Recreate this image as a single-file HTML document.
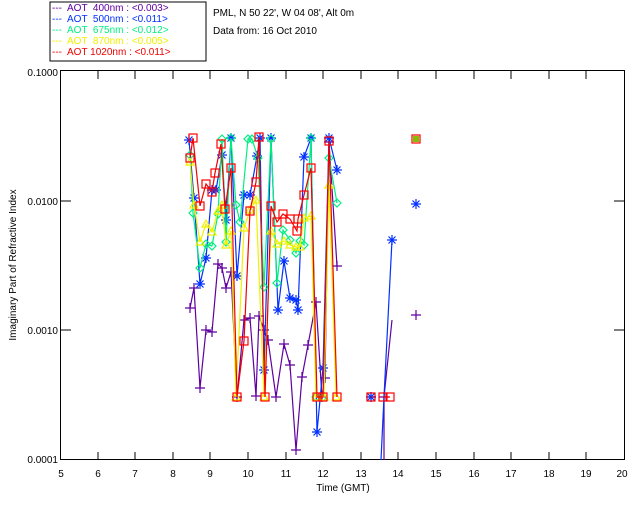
<!DOCTYPE html>
<html><head><meta charset="utf-8"><style>
body{margin:0;background:#fff;width:640px;height:512px;overflow:hidden}
svg{display:block}
text{font-family:"Liberation Sans",sans-serif;font-size:10px}
</style></head><body>
<svg width="640" height="512" viewBox="0 0 640 512">
<defs>
<marker id="mr" markerWidth="10" markerHeight="10" refX="5" refY="5" markerUnits="userSpaceOnUse"><rect x="1" y="1" width="8" height="8" fill="none" stroke="#f00" stroke-width="1.2"/></marker>
<marker id="mb" markerWidth="12" markerHeight="12" refX="6" refY="6" markerUnits="userSpaceOnUse"><path d="M1 6H11M6 1V11M2.5 2.5L9.5 9.5M9.5 2.5L2.5 9.5" stroke="#0030ff" stroke-width="1.2"/></marker>
<marker id="mg" markerWidth="10" markerHeight="10" refX="5" refY="5" markerUnits="userSpaceOnUse"><path d="M5 1L9 5L5 9L1 5Z" fill="none" stroke="#00f080" stroke-width="1.2"/></marker>
<marker id="my" markerWidth="10" markerHeight="10" refX="5" refY="5" markerUnits="userSpaceOnUse"><path d="M5 1L9 8H1Z" fill="none" stroke="#f0f000" stroke-width="1.2"/></marker>
<marker id="mp" markerWidth="10" markerHeight="10" refX="5" refY="5" markerUnits="userSpaceOnUse"><path d="M0 5H10M5 0V10" stroke="#6000a0" stroke-width="1.2"/></marker>
</defs>
<rect x="50" y="2" width="156" height="59" fill="none" stroke="#000"/>
<g font-size="10">
<text x="52" y="11" fill="#6000a0" xml:space="preserve">---  AOT  400nm : &lt;0.003&gt;</text>
<text x="52" y="22" fill="#0030ff" xml:space="preserve">---  AOT  500nm : &lt;0.011&gt;</text>
<text x="52" y="33" fill="#00f080" xml:space="preserve">---  AOT  675nm : &lt;0.012&gt;</text>
<text x="52" y="44" fill="#f0f000" xml:space="preserve">---  AOT  870nm : &lt;0.005&gt;</text>
<text x="52" y="55" fill="#f00000" xml:space="preserve">---  AOT 1020nm : &lt;0.011&gt;</text>
</g>
<text x="213" y="16">PML, N 50 22', W 04 08', Alt 0m</text>
<text x="213" y="34">Data from: 16 Oct 2010</text>
<rect x="60.5" y="70.5" width="564" height="389" fill="none" stroke="#000"/>
<g stroke="#000">
<path d="M98 460v-8M135 460v-8M173 460v-8M210 460v-8M248 460v-8M286 460v-8M323 460v-8M361 460v-8M398 460v-8M436 460v-8M474 460v-8M511 460v-8M549 460v-8M586 460v-8
M98 71v8M135 71v8M173 71v8M210 71v8M248 71v8M286 71v8M323 71v8M361 71v8M398 71v8M436 71v8M474 71v8M511 71v8M549 71v8M586 71v8
M61 201h10M61 330h10M624 201h-10M624 330h-10"/>
</g>
<g font-size="9" text-anchor="end">
<text x="58" y="76">0.1000</text><text x="58" y="205">0.0100</text><text x="58" y="334">0.0010</text><text x="58" y="463">0.0001</text>
</g>
<g font-size="10" text-anchor="middle">
<text x="61" y="477">5</text><text x="98" y="477">6</text><text x="135" y="477">7</text><text x="173" y="477">8</text><text x="210" y="477">9</text><text x="248" y="477">10</text><text x="286" y="477">11</text><text x="323" y="477">12</text><text x="361" y="477">13</text><text x="398" y="477">14</text><text x="436" y="477">15</text><text x="474" y="477">16</text><text x="511" y="477">17</text><text x="549" y="477">18</text><text x="586" y="477">19</text><text x="622" y="477">20</text>
<text x="343" y="491">Time (GMT)</text>
<text transform="translate(16 265) rotate(-90)">Imaginary Part of Refractive Index</text>
</g>
<g fill="none" stroke-width="1.2">
<polyline stroke="#6000a0" marker-start="url(#mp)" marker-mid="url(#mp)" marker-end="url(#mp)" points="190,308 194,288 200,388 206,330 212,332 218,264 222,268 226,288 231,272 237,397 244,320 250,318 256,396 259,316 264,330 268,340 276,397 284,344 290,365 296,450 302,377 308,345 316,302 322,397 325,378 329,142 337,266"/>
<polyline stroke="#6000a0" marker-start="url(#mp)" points="371,397 376,397"/>
<polyline stroke="#6000a0" marker-mid="url(#mp)" points="384,460 384,397 392,320"/>
<polyline stroke="#6000a0" marker-start="url(#mp)" points="416,315 416,315"/>
<polyline stroke="#0030ff" marker-start="url(#mb)" marker-mid="url(#mb)" marker-end="url(#mb)" points="189,140 194,198 200,284 206,258 212,190 216,190 222,155 226,220 231,138 237,276 244,195 250,195 257,156 260,138 264,370 271,138 278,310 284,261 290,298 296,300 298,310 304,157 311,138 317,432 323,368 329,138 337,170"/>
<polyline stroke="#0030ff" marker-start="url(#mb)" points="371,397 373,397"/>
<polyline stroke="#0030ff" marker-end="url(#mb)" points="381,460 384,397 392,240"/>
<polyline stroke="#0030ff" marker-start="url(#mb)" points="416,204 416,204"/>
<polyline stroke="#00f080" marker-start="url(#mg)" marker-mid="url(#mg)" marker-end="url(#mg)" points="190,155 193,213 200,268 206,244 212,246 218,214 222,139 226,242 231,138 236,205 240,222 248,139 252,139 258,158 264,287 271,139 277,283 283,230 290,240 296,253 300,241 304,245 311,138 316,397 323,397 329,158 337,203"/>
<polyline stroke="#f0f000" marker-start="url(#my)" marker-mid="url(#my)" marker-end="url(#my)" points="190,162 194,205 200,242 206,224 212,232 218,211 222,205 226,245 231,231 236,397 244,228 250,210 256,200 264,397 271,231 277,244 284,241 290,245 296,247 300,247 304,218 311,216 316,397 324,397 329,185 336,397"/>
<polyline stroke="#f00000" marker-start="url(#mr)" marker-mid="url(#mr)" marker-end="url(#mr)" points="190,158 193,138 200,206 206,184 212,192 215,173 221,144 225,209 231,168 237,397 244,341 250,211 256,182 259,137 265,397 271,206 277,222 283,214 290,219 297,231 298,219 304,195 311,168 317,397 323,397 329,141 337,397"/>
<polyline stroke="#f00000" marker-start="url(#mr)" points="371,397 373,397"/>
<polyline stroke="#f00000" marker-start="url(#mr)" marker-end="url(#mr)" points="383,397 390,397"/>
<polyline stroke="#f00000" stroke-width="0" marker-start="url(#mr)" points="416,139 416,139"/>
<rect x="413" y="136" width="6" height="6" fill="#80c000" stroke="none"/>
</g>
</svg>
</body></html>
